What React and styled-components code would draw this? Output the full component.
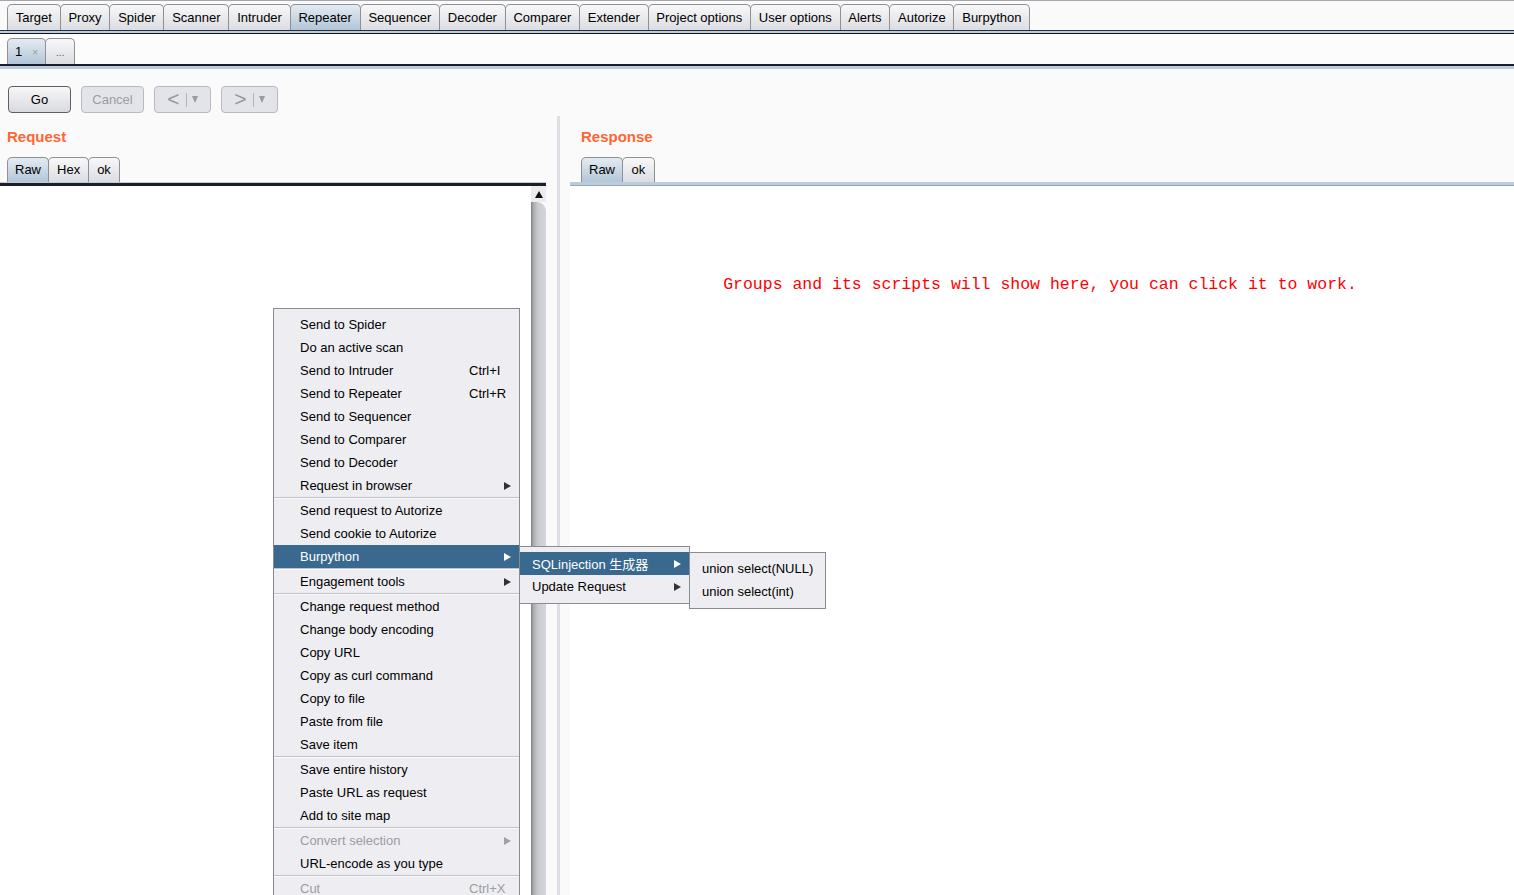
import React from 'react';
import styled, { createGlobalStyle } from 'styled-components';

const mainTabs = [
  'Target', 'Proxy', 'Spider', 'Scanner', 'Intruder', 'Repeater', 'Sequencer', 'Decoder',
  'Comparer', 'Extender', 'Project options', 'User options', 'Alerts', 'Autorize', 'Burpython',
];

// sep: separator drawn above the item
const menuItems = [
  { label: 'Send to Spider' },
  { label: 'Do an active scan' },
  { label: 'Send to Intruder', shortcut: 'Ctrl+I' },
  { label: 'Send to Repeater', shortcut: 'Ctrl+R' },
  { label: 'Send to Sequencer' },
  { label: 'Send to Comparer' },
  { label: 'Send to Decoder' },
  { label: 'Request in browser', sub: true },
  { label: 'Send request to Autorize', sep: true },
  { label: 'Send cookie to Autorize' },
  { label: 'Burpython', sub: true, active: true },
  { label: 'Engagement tools', sub: true, sep: true },
  { label: 'Change request method', sep: true },
  { label: 'Change body encoding' },
  { label: 'Copy URL' },
  { label: 'Copy as curl command' },
  { label: 'Copy to file' },
  { label: 'Paste from file' },
  { label: 'Save item' },
  { label: 'Save entire history', sep: true },
  { label: 'Paste URL as request' },
  { label: 'Add to site map' },
  { label: 'Convert selection', sub: true, disabled: true, sep: true },
  { label: 'URL-encode as you type' },
  { label: 'Cut', shortcut: 'Ctrl+X', disabled: true, sep: true },
];

const GlobalStyle = createGlobalStyle`
  html, body { margin: 0; padding: 0; }
  body {
    font-family: "Liberation Sans", Arial, "Noto Sans CJK SC", sans-serif;
    font-size: 13px;
    background: #fafafa;
    overflow: hidden;
  }
`;

const Frame = styled.div`
  position: relative;
  width: 1514px;
  height: 895px;
  overflow: hidden;
  display: flex;
  flex-direction: column;
  background: #fafafa;
`;

const TopLine = styled.div`
  height: 1px;
  background: #a3a7b0;
`;

const TabRow = styled.div`
  display: flex;
  align-items: flex-end;
  padding: ${(p) => p.$top}px 0 0 7px;
  background: ${(p) => p.$bg || 'transparent'};
`;

const Tab = styled.div`
  height: ${(p) => p.$h || 26}px;
  line-height: ${(p) => (p.$h || 26) - 1}px;
  padding: 0 ${(p) => p.$pad || 7.75}px;
  border: 1px solid #8e9096;
  border-bottom: none;
  border-radius: 5px 5px 0 0;
  margin-right: -1px;
  box-sizing: border-box;
  color: #000;
  white-space: nowrap;
  background: ${(p) =>
    p.$active
      ? 'linear-gradient(#e4ebf2, #b2c6d8)'
      : 'linear-gradient(#f8f8f9, #dcdde2)'};
`;

const CloseMark = styled.span`
  color: #9a9a9a;
  font-size: 10px;
  margin-left: 10px;
`;

const Dots = styled.span`
  color: #555;
  font-size: 10px;
`;

const MainRule = styled.div`
  height: 2px;
  background: #b9cde2;
  border-top: 1px solid #2c2f3a;
  border-bottom: 1px solid #15161c;
`;

const SubRule = styled.div`
  height: 3px;
  background: #b9cde2;
  border-top: 2px solid #1c1e26;
`;

const Toolbar = styled.div`
  display: flex;
  gap: 10px;
  padding: 17px 0 3px 8px;
`;

const Button = styled.div`
  width: ${(p) => p.$w}px;
  height: 27px;
  box-sizing: border-box;
  border: 1px solid ${(p) => (p.$disabled ? '#b8bac1' : '#5e5f63')};
  border-radius: 4px;
  background: ${(p) =>
    p.$disabled ? '#e3e4e9' : 'linear-gradient(#f7f7f8, #d9dadf)'};
  color: ${(p) => (p.$disabled ? '#9b9ca2' : '#000')};
  display: flex;
  align-items: center;
  justify-content: center;
  font-size: 13px;
`;

const Chevron = styled.span`
  font-size: 21px;
  line-height: 20px;
  color: #94959b;
  font-family: "Liberation Sans", Arial, sans-serif;
  margin-top: -2px;
`;

const VSep = styled.span`
  width: 1px;
  height: 14px;
  background: #b3b4ba;
  margin: 0 5px 0 6px;
`;

const Caret = styled.span`
  width: 0;
  height: 0;
  border-left: 3.5px solid transparent;
  border-right: 3.5px solid transparent;
  border-top: 7px solid #9a9ba1;
`;

const Panes = styled.div`
  flex: 1;
  display: flex;
  min-height: 0;
`;

const Pane = styled.div`
  display: flex;
  flex-direction: column;
  width: ${(p) => (p.$w ? `${p.$w}px` : 'auto')};
  flex: ${(p) => (p.$w ? 'none' : 1)};
`;

const PaneTitle = styled.div`
  color: #ff6633;
  font-weight: bold;
  font-size: 15px;
  line-height: 18px;
  padding: 12px 0 0 ${(p) => p.$indent}px;
  height: 29px;
`;

const PaneTabs = styled.div`
  display: flex;
  padding-left: ${(p) => p.$indent}px;
`;

const PaneRule = styled.div`
  height: ${(p) => (p.$focus ? 1 : 3)}px;
  background: #b9cde2;
  border-bottom: ${(p) => (p.$focus ? '3px solid #1d1f27' : '1px solid #9fa6b0')};
`;

const Editor = styled.div`
  flex: 1;
  display: flex;
  background: #fff;
`;

const EditorBody = styled.div`
  flex: 1;
`;

const Scrollbar = styled.div`
  width: 15px;
  display: flex;
  flex-direction: column;
  background: #fafafa;
`;

const ScrollUp = styled.div`
  height: 16px;
  background: #ececf0;
  display: flex;
  align-items: center;
  justify-content: center;
  &::after {
    content: '';
    border-left: 4px solid transparent;
    border-right: 4px solid transparent;
    border-bottom: 7px solid #111;
  }
`;

const ScrollThumb = styled.div`
  flex: 1;
  border-top-right-radius: 9px;
  background: linear-gradient(to right, #7d7d80 0%, #a9aaae 15%, #c9cacf 45%, #d5d6da 100%);
`;

const Splitter = styled.div`
  width: 24px;
  display: flex;
  justify-content: center;
  padding-left: 1px;
  box-sizing: border-box;
  &::before {
    content: '';
    width: 3px;
    background: #dddfe5;
  }
`;

const Hint = styled.div`
  color: #ff0000;
  font-family: "Liberation Mono", "Courier New", monospace;
  font-size: 16.5px;
  line-height: 20px;
  text-align: center;
  padding-top: 89px;
  padding-right: 4px;
  white-space: pre;
`;

const Menu = styled.div`
  position: absolute;
  left: ${(p) => p.$x}px;
  top: ${(p) => p.$y}px;
  width: ${(p) => p.$w}px;
  box-sizing: border-box;
  border: 1px solid #8a8b90;
  background: #eeeef2;
  padding: ${(p) => p.$pt}px 0 ${(p) => p.$pb}px;
  z-index: 2;
`;

const Item = styled.div`
  position: relative;
  height: 23px;
  display: flex;
  align-items: center;
  padding-left: ${(p) => p.$indent}px;
  white-space: nowrap;
  color: ${(p) => (p.$active ? '#fff' : p.$disabled ? '#9c9ca2' : '#000')};
  background: ${(p) => (p.$active ? '#39698f' : 'transparent')};
`;

const Separator = styled.div`
  height: 1px;
  background: #c2c3c8;
  border-bottom: 1px solid #fafafc;
`;

const ItemLabel = styled.span`
  flex: 1;
`;

const Trail = styled.span`
  width: ${(p) => p.$w}px;
  display: flex;
  justify-content: ${(p) => (p.$arrow ? 'flex-end' : 'flex-start')};
  padding-right: ${(p) => (p.$arrow ? 8 : 0)}px;
  box-sizing: border-box;
`;

const Arrow = styled.span`
  width: 0;
  height: 0;
  border-top: 4.5px solid transparent;
  border-bottom: 4.5px solid transparent;
  border-left: 7px solid ${(p) => (p.$active ? '#fff' : p.$disabled ? '#a0a0a6' : '#333')};
`;

const SubMenu = styled(Menu)`
  left: 100%;
  top: ${(p) => p.$y}px;
`;

function MenuRow({ item, indent, trail, children }) {
  const hasArrow = item.sub;
  return (
    <Item $indent={indent} $active={item.active} $disabled={item.disabled}>
      <ItemLabel>{item.label}</ItemLabel>
      <Trail $w={trail} $arrow={hasArrow}>
        {hasArrow ? <Arrow $active={item.active} $disabled={item.disabled} /> : item.shortcut}
      </Trail>
      {children}
    </Item>
  );
}

function ContextMenu() {
  return (
    <Menu $x={273} $y={308} $w={247} $pt={4} $pb={4}>
      {menuItems.map((item) => (
        <React.Fragment key={item.label}>
          {item.sep && <Separator />}
          <MenuRow item={item} indent={26} trail={50}>
            {item.active && (
              <SubMenu $w={171} $y={1} $pt={5} $pb={5}>
                <MenuRow item={{ label: 'SQLinjection 生成器', sub: true, active: true }} indent={12} trail={30}>
                  <SubMenu $w={137} $y={0} $pt={4} $pb={5}>
                    <MenuRow item={{ label: 'union select(NULL)' }} indent={12} trail={0} />
                    <MenuRow item={{ label: 'union select(int)' }} indent={12} trail={0} />
                  </SubMenu>
                </MenuRow>
                <MenuRow item={{ label: 'Update Request', sub: true }} indent={12} trail={30} />
              </SubMenu>
            )}
          </MenuRow>
        </React.Fragment>
      ))}
    </Menu>
  );
}

export default function App() {
  return (
    <>
      <GlobalStyle />
      <Frame>
        <TopLine />
        <TabRow $top={3}>
          {mainTabs.map((t) => (
            <Tab key={t} $active={t === 'Repeater'}>{t}</Tab>
          ))}
        </TabRow>
        <MainRule />
        <TabRow $top={4} $bg="#fcfcfc">
          <Tab $active $pad={7}>1<CloseMark>×</CloseMark></Tab>
          <Tab $pad={10}><Dots>...</Dots></Tab>
        </TabRow>
        <SubRule />
        <Toolbar>
          <Button $w={63}>Go</Button>
          <Button $w={63} $disabled>Cancel</Button>
          <Button $w={57} $disabled>
            <Chevron>&lt;</Chevron><VSep /><Caret />
          </Button>
          <Button $w={57} $disabled>
            <Chevron>&gt;</Chevron><VSep /><Caret />
          </Button>
        </Toolbar>
        <Panes>
          <Pane $w={546}>
            <PaneTitle $indent={7}>Request</PaneTitle>
            <PaneTabs $indent={7}>
              <Tab $h={25} $active $pad={7}>Raw</Tab>
              <Tab $h={25} $pad={8}>Hex</Tab>
              <Tab $h={25} $pad={8}>ok</Tab>
            </PaneTabs>
            <PaneRule $focus />
            <Editor>
              <EditorBody />
              <Scrollbar>
                <ScrollUp />
                <ScrollThumb />
              </Scrollbar>
            </Editor>
          </Pane>
          <Splitter />
          <Pane>
            <PaneTitle $indent={11}>Response</PaneTitle>
            <PaneTabs $indent={11}>
              <Tab $h={25} $active $pad={7}>Raw</Tab>
              <Tab $h={25} $pad={8.5}>ok</Tab>
            </PaneTabs>
            <PaneRule />
            <Editor>
              <EditorBody>
                <Hint>Groups and its scripts will show here, you can click it to work.</Hint>
              </EditorBody>
            </Editor>
          </Pane>
        </Panes>
        <ContextMenu />
      </Frame>
    </>
  );
}
